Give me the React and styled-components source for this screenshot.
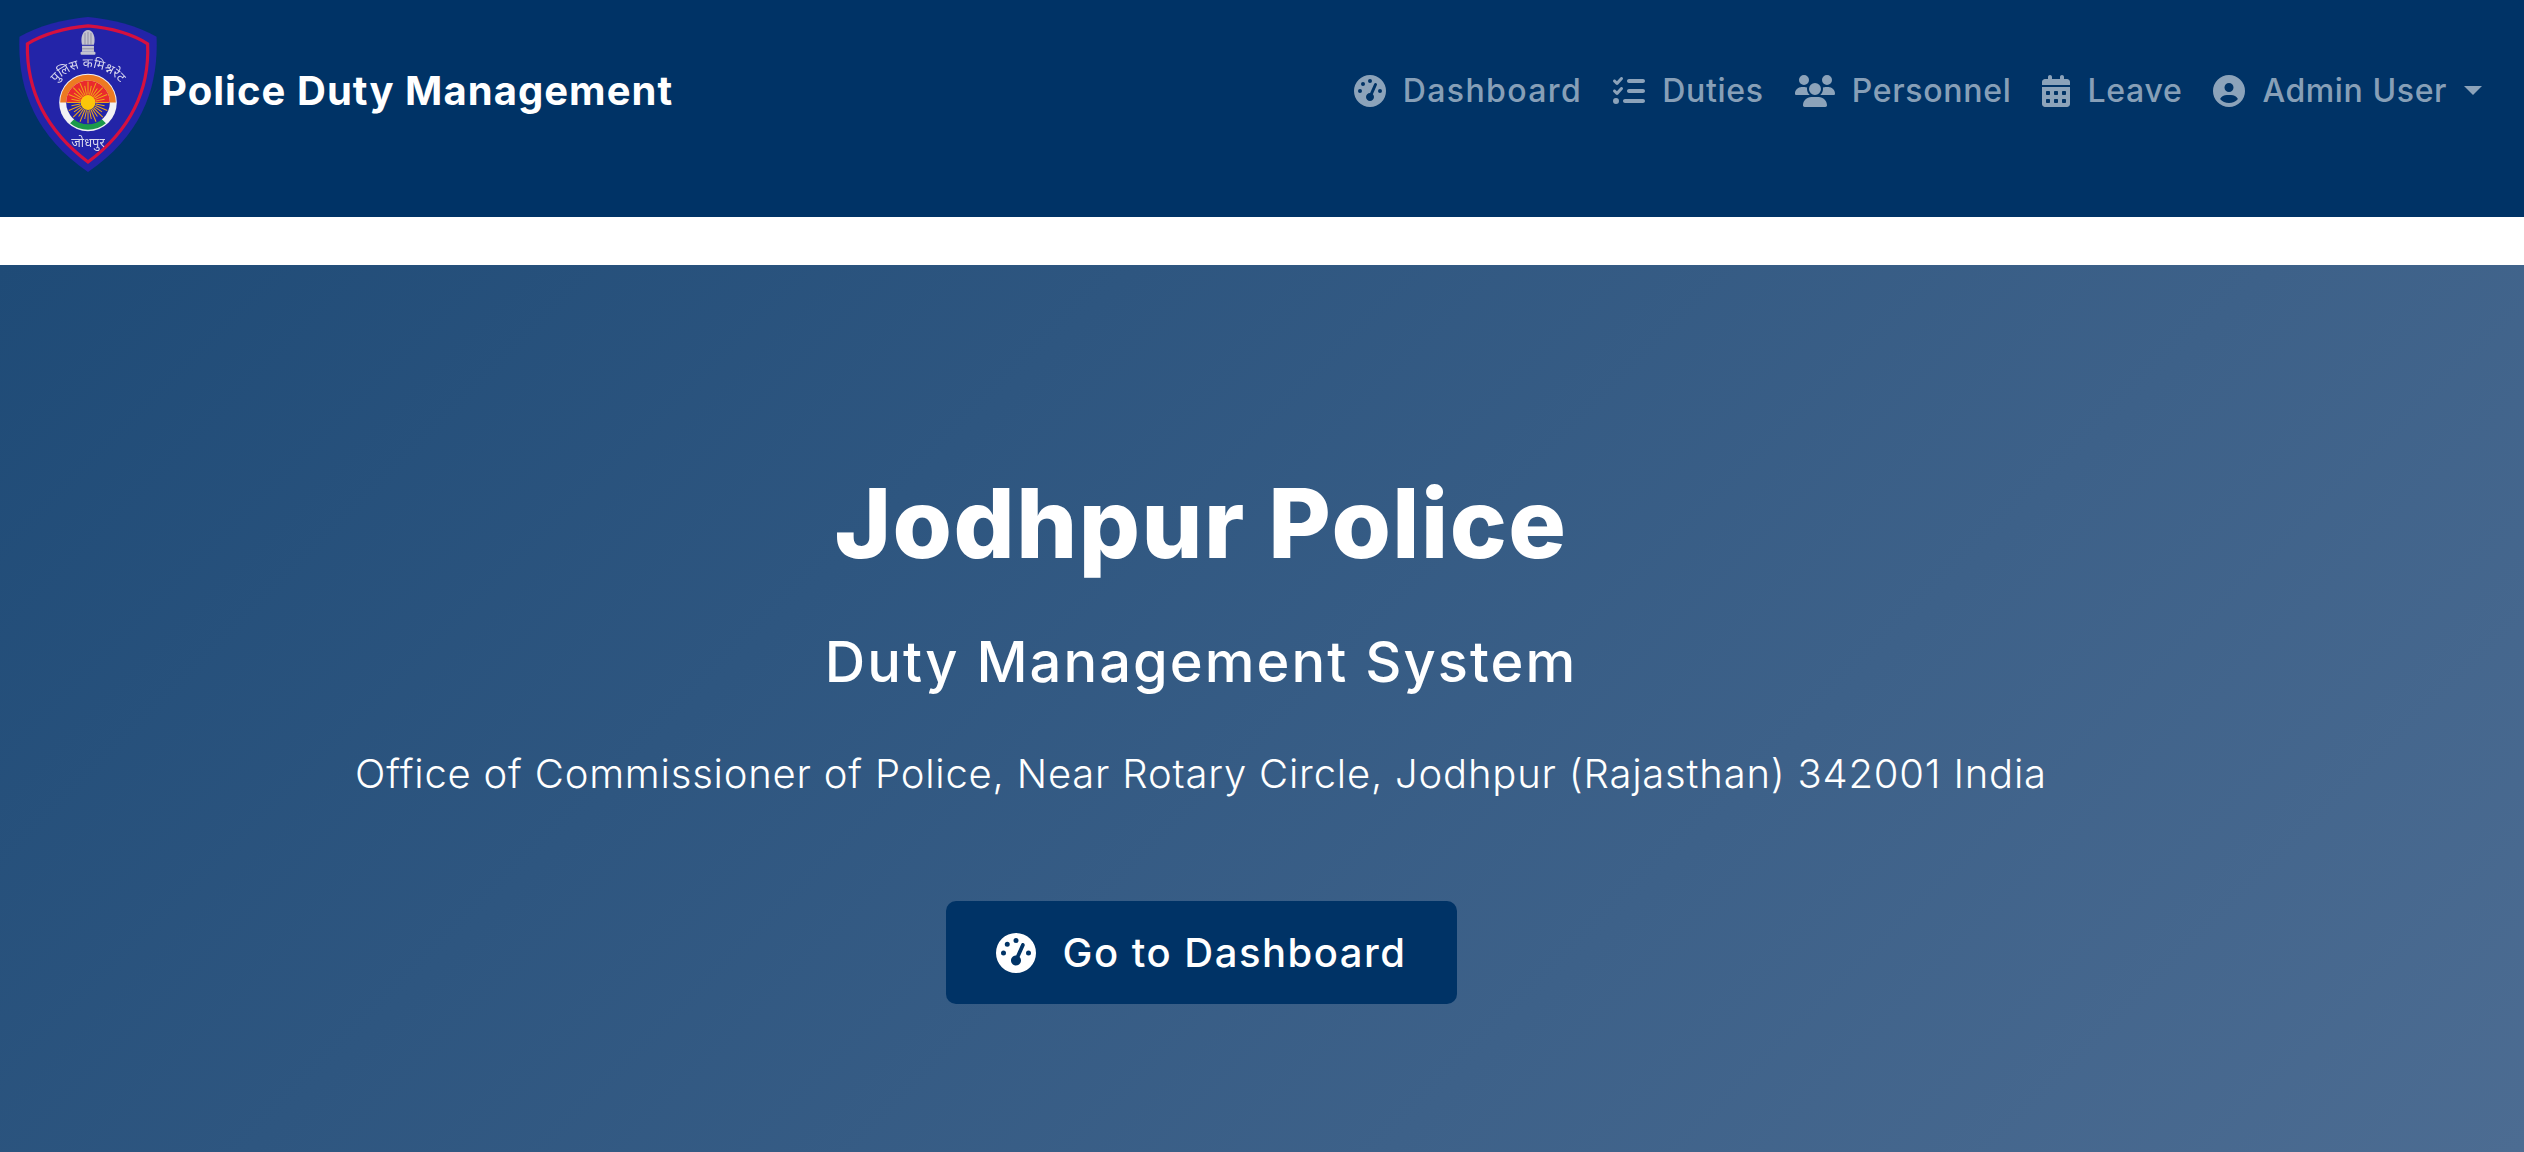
import React from 'react'
import styled, { createGlobalStyle } from 'styled-components'
import { FaGaugeHigh, FaListCheck, FaUsers, FaCalendarDays, FaCircleUser } from 'react-icons/fa6'

const GlobalStyle = createGlobalStyle`
    html, body {
        margin: 0;
        padding: 0;
        height: 100%;
        background: #fff;
        overflow: hidden;
    }
    body {
        font-family: Inter, "Noto Sans", sans-serif;
    }
`

const rays = Array.from({ length: 32 }, (_, i) => (i * 360) / 32)

function Logo() {
    return (
        <LogoSvg viewBox="0 0 139 156" aria-label="Jodhpur Police crest">
            <defs>
                <path id="crestArc" d="M32 73 A42 42 0 0 1 106 73" />
            </defs>
            <path d="M69 0 C92 2 120 9 138 20 C140 70 124 118 69 156 C14 118 -2 70 0 20 C18 9 46 2 69 0 Z" fill="#2324a8" />
            <path d="M69 9 C91 11 113 17 129 27 C131 72 114 112 69 146 C24 112 7 72 8 27 C25 17 47 11 69 9 Z" fill="none" stroke="#d5103f" strokeWidth="3.2" />
            <g fill="#c4c4cf">
                <rect x="61.5" y="35" width="15" height="3" rx="1" />
                <rect x="63" y="29" width="12" height="6" />
                <path d="M63 28 C61 20 64 13 69 13 C74 13 77 20 75 28 Z" />
            </g>
            <path d="M66 16 V28 M69 15 V28 M72 16 V28 M63 32 H75" stroke="#85859a" strokeWidth="0.8" />
            <text fontSize="13" fontFamily="Noto Sans, sans-serif" fill="#d8d8ee">
                <textPath href="#crestArc" startOffset="50%" textAnchor="middle">पुलिस कमिश्नरेट</textPath>
            </text>
            <circle cx="69" cy="86" r="29" fill="#f1f1f4" />
            <path d="M41 86 A28 28 0 0 1 97 86 L91 86 A22 22 0 0 0 47 86 Z" fill="#ec7a22" />
            <path d="M51 107 A28 28 0 0 0 87 107 L82 102 A21 21 0 0 1 56 102 Z" fill="#1c9a4a" />
            <path d="M47 86 A22 22 0 0 1 91 86 Z" fill="#ea2a2c" />
            <path d="M47 86 A22 22 0 0 0 91 86 Z" fill="#2324a8" />
            {rays.map(a => (
                <line key={a} x1="69" y1="78" x2="69" y2={a % 22.5 === 0 ? 65 : 69} stroke="#f0a818" strokeWidth="1" transform={`rotate(${a} 69 86)`} />
            ))}
            <circle cx="69" cy="86" r="7.5" fill="#fbc60a" />
            <text x="69" y="131" textAnchor="middle" fontSize="13" fontFamily="Noto Sans, sans-serif" fill="#d8d8ee">जोधपुर</text>
        </LogoSvg>
    )
}

export default function App() {
    return (
        <>
            <GlobalStyle />
            <Nav>
                <Brand>
                    <Logo />
                    <BrandName>Police Duty Management</BrandName>
                </Brand>
                <NavLinks>
                    <NavLink $track={1.4}><FaGaugeHigh />Dashboard</NavLink>
                    <NavLink><FaListCheck />Duties</NavLink>
                    <NavLink $iconWidth={40}><FaUsers />Personnel</NavLink>
                    <NavLink $iconWidth={28}><FaCalendarDays />Leave</NavLink>
                    <NavLink $track={0.6}><FaCircleUser />Admin User<Caret /></NavLink>
                </NavLinks>
            </Nav>
            <Hero>
                <Title>Jodhpur Police</Title>
                <Subtitle>Duty Management System</Subtitle>
                <Address>Office of Commissioner of Police, Near Rotary Circle, Jodhpur (Rajasthan) 342001 India</Address>
                <DashboardButton href="#"><FaGaugeHigh />Go to Dashboard</DashboardButton>
            </Hero>
        </>
    )
}

const Nav = styled.nav`
    height: 217px;
    box-sizing: border-box;
    padding: 17px 42px 45px 19px;
    background: #003366;
    display: flex;
    align-items: center;
    justify-content: space-between;
    margin-bottom: 48px;
`
const Brand = styled.div`
    display: flex;
    align-items: center;
    gap: 3px;
`
const LogoSvg = styled.svg`
    width: 139px;
    height: 155px;
    display: block;
    filter: blur(0.4px);
`
const BrandName = styled.span`
    color: #fff;
    font-size: 40px;
    font-weight: 650;
    letter-spacing: 1.05px;
    margin-bottom: 8px;
`
const NavLinks = styled.div`
    display: flex;
    align-items: center;
    gap: 31px;
    margin-bottom: 8px;
`
const NavLink = styled.a`
    display: flex;
    align-items: center;
    gap: 17px;
    color: rgba(255, 255, 255, 0.55);
    font-size: 32px;
    font-weight: 500;
    letter-spacing: ${p => p.$track || 0.7}px;
    white-space: nowrap;

    svg {
        flex: none;
        width: ${p => p.$iconWidth || 32}px;
        height: 32px;
    }
`
const Caret = styled.span`
    width: 0;
    height: 0;
    border-top: 9.6px solid currentColor;
    border-left: 9.6px solid transparent;
    border-right: 9.6px solid transparent;
`
const Hero = styled.section`
    height: 887px;
    box-sizing: border-box;
    padding: 200px 122px 0 0;
    display: flex;
    flex-direction: column;
    align-items: center;
    color: #fff;
    background: linear-gradient(135deg, #1f4b77 0%, #4c6c92 100%);
`
const Title = styled.h1`
    margin: 0;
    font-size: 96px;
    line-height: 116px;
    font-weight: 800;
    letter-spacing: 1.5px;
`
const Subtitle = styled.h2`
    margin: 48px 0 0;
    font-size: 56px;
    line-height: 67px;
    font-weight: 550;
    letter-spacing: 2.05px;
`
const Address = styled.p`
    margin: 48px 0 0;
    font-size: 40px;
    line-height: 60px;
    font-weight: 300;
    letter-spacing: 0.8px;
`
const DashboardButton = styled.a`
    margin-top: 97px;
    width: 511px;
    height: 103px;
    box-sizing: border-box;
    display: flex;
    align-items: center;
    justify-content: center;
    gap: 27px;
    border-radius: 10px;
    background: #003366;
    color: #fff;
    font-size: 40px;
    font-weight: 500;
    letter-spacing: 1.5px;
    text-decoration: none;

    svg {
        width: 40px;
        height: 40px;
    }
`
